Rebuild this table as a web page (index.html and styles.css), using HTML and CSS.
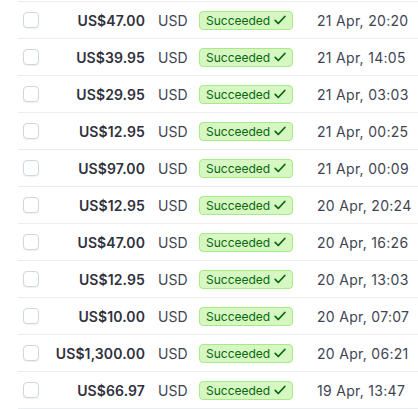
FILE: index.html
```html
<!DOCTYPE html>
<html>
<head>
<meta charset="utf-8">
<link rel="stylesheet" href="styles.css">
</head>
<body>
<div class="table">
  <div class="row"><span class="check"></span><span class="amount">US$47.00</span><span class="cur">USD</span><span class="cell-badge"><span class="badge">Succeeded<svg viewBox="0 0 16 16"><path d="M2.5 8.5l3.5 3.5 7.5-8"/></svg></span></span><span class="date">21 Apr, 20:20</span></div>
  <div class="row"><span class="check"></span><span class="amount">US$39.95</span><span class="cur">USD</span><span class="cell-badge"><span class="badge">Succeeded<svg viewBox="0 0 16 16"><path d="M2.5 8.5l3.5 3.5 7.5-8"/></svg></span></span><span class="date">21 Apr, 14:05</span></div>
  <div class="row"><span class="check"></span><span class="amount">US$29.95</span><span class="cur">USD</span><span class="cell-badge"><span class="badge">Succeeded<svg viewBox="0 0 16 16"><path d="M2.5 8.5l3.5 3.5 7.5-8"/></svg></span></span><span class="date">21 Apr, 03:03</span></div>
  <div class="row"><span class="check"></span><span class="amount">US$12.95</span><span class="cur">USD</span><span class="cell-badge"><span class="badge">Succeeded<svg viewBox="0 0 16 16"><path d="M2.5 8.5l3.5 3.5 7.5-8"/></svg></span></span><span class="date">21 Apr, 00:25</span></div>
  <div class="row"><span class="check"></span><span class="amount">US$97.00</span><span class="cur">USD</span><span class="cell-badge"><span class="badge">Succeeded<svg viewBox="0 0 16 16"><path d="M2.5 8.5l3.5 3.5 7.5-8"/></svg></span></span><span class="date">21 Apr, 00:09</span></div>
  <div class="row"><span class="check"></span><span class="amount">US$12.95</span><span class="cur">USD</span><span class="cell-badge"><span class="badge">Succeeded<svg viewBox="0 0 16 16"><path d="M2.5 8.5l3.5 3.5 7.5-8"/></svg></span></span><span class="date">20 Apr, 20:24</span></div>
  <div class="row"><span class="check"></span><span class="amount">US$47.00</span><span class="cur">USD</span><span class="cell-badge"><span class="badge">Succeeded<svg viewBox="0 0 16 16"><path d="M2.5 8.5l3.5 3.5 7.5-8"/></svg></span></span><span class="date">20 Apr, 16:26</span></div>
  <div class="row"><span class="check"></span><span class="amount">US$12.95</span><span class="cur">USD</span><span class="cell-badge"><span class="badge">Succeeded<svg viewBox="0 0 16 16"><path d="M2.5 8.5l3.5 3.5 7.5-8"/></svg></span></span><span class="date">20 Apr, 13:03</span></div>
  <div class="row"><span class="check"></span><span class="amount">US$10.00</span><span class="cur">USD</span><span class="cell-badge"><span class="badge">Succeeded<svg viewBox="0 0 16 16"><path d="M2.5 8.5l3.5 3.5 7.5-8"/></svg></span></span><span class="date">20 Apr, 07:07</span></div>
  <div class="row"><span class="check"></span><span class="amount">US$1,300.00</span><span class="cur">USD</span><span class="cell-badge"><span class="badge">Succeeded<svg viewBox="0 0 16 16"><path d="M2.5 8.5l3.5 3.5 7.5-8"/></svg></span></span><span class="date">20 Apr, 06:21</span></div>
  <div class="row"><span class="check"></span><span class="amount">US$66.97</span><span class="cur">USD</span><span class="cell-badge"><span class="badge">Succeeded<svg viewBox="0 0 16 16"><path d="M2.5 8.5l3.5 3.5 7.5-8"/></svg></span></span><span class="date">19 Apr, 13:47</span></div>
</div>
</body>
</html>
```
FILE: styles.css
```css
html, body {
  margin: 0;
  padding: 0;
  background: #ffffff;
}
body {
  font-family: Inter, "Liberation Sans", sans-serif;
  font-size: 14px;
  color: #414552;
}
.table {
  margin-top: 1px;
  margin-left: 18px;
  border-bottom: 1px solid #ebeef1;
}
.row {
  display: grid;
  grid-template-columns: 21px 101px 54px 118px 1fr;
  align-items: center;
  height: 36px;
  border-top: 1px solid #ebeef1;
  padding-left: 5px;
}
.check {
  width: 14px;
  height: 14px;
  border: 1px solid #d0d6e0;
  border-radius: 4px;
  box-shadow: 0 1px 1px rgba(64, 68, 82, 0.08);
  background: #fff;
}
.amount {
  text-align: right;
  font-weight: 600;
  color: #30313d;
  white-space: nowrap;
  letter-spacing: 0.1px;
}
.cur {
  padding-left: 13px;
  white-space: nowrap;
}
.cell-badge {
  display: flex;
}
.badge {
  display: inline-flex;
  align-items: center;
  gap: 3px;
  height: 17px;
  padding: 0 5px 0 6px;
  background: #d7f7c2;
  border: 1px solid #a6eb84;
  border-radius: 4px;
  color: #05690d;
  font-size: 12px;
  white-space: nowrap;
}
.badge svg {
  width: 14px;
  height: 14px;
  fill: none;
  stroke: #05690d;
  stroke-width: 2;
  stroke-linecap: round;
  stroke-linejoin: round;
}
.date {
  white-space: nowrap;
  letter-spacing: 0.3px;
}
```
